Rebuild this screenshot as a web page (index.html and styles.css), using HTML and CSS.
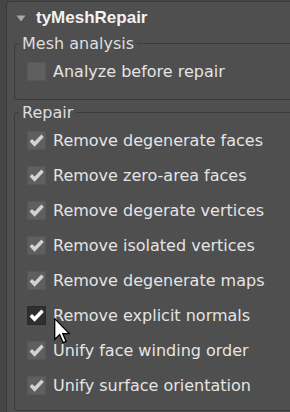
FILE: index.html
```html
<!DOCTYPE html>
<html lang="en">
<head>
    <meta charset="UTF-8">
    <title>tyMeshRepair</title>
    <link rel="stylesheet" href="styles.css">
</head>
<body>
    <div class="panel">
        <div class="rollout-header">
            <svg class="arrow" width="10" height="7" viewBox="0 0 10 7"><path d="M0.5 0.5 H9.5 L5 6.5 Z" fill="#a8a8a8"/></svg>
            <span class="rollout-title">tyMeshRepair</span>
        </div>

        <fieldset class="group">
            <legend>Mesh analysis</legend>
            <label class="check-row">
                <span class="box"></span>
                <span class="check-label">Analyze before repair</span>
            </label>
        </fieldset>

        <fieldset class="group group-repair">
            <legend>Repair</legend>
            <label class="check-row">
                <span class="box checked"><svg viewBox="0 0 17 17"><path d="M1.6 9.4 L4 7 L6.6 9.5 L13.4 2.5 L15.8 4.9 L6.6 14.8 Z"/></svg></span>
                <span class="check-label">Remove degenerate faces</span>
            </label>
            <label class="check-row">
                <span class="box checked"><svg viewBox="0 0 17 17"><path d="M1.6 9.4 L4 7 L6.6 9.5 L13.4 2.5 L15.8 4.9 L6.6 14.8 Z"/></svg></span>
                <span class="check-label">Remove zero-area faces</span>
            </label>
            <label class="check-row">
                <span class="box checked"><svg viewBox="0 0 17 17"><path d="M1.6 9.4 L4 7 L6.6 9.5 L13.4 2.5 L15.8 4.9 L6.6 14.8 Z"/></svg></span>
                <span class="check-label">Remove degerate vertices</span>
            </label>
            <label class="check-row">
                <span class="box checked"><svg viewBox="0 0 17 17"><path d="M1.6 9.4 L4 7 L6.6 9.5 L13.4 2.5 L15.8 4.9 L6.6 14.8 Z"/></svg></span>
                <span class="check-label">Remove isolated vertices</span>
            </label>
            <label class="check-row">
                <span class="box checked"><svg viewBox="0 0 17 17"><path d="M1.6 9.4 L4 7 L6.6 9.5 L13.4 2.5 L15.8 4.9 L6.6 14.8 Z"/></svg></span>
                <span class="check-label">Remove degenerate maps</span>
            </label>
            <label class="check-row hover">
                <span class="box checked"><svg viewBox="0 0 17 17"><path d="M1.6 9.4 L4 7 L6.6 9.5 L13.4 2.5 L15.8 4.9 L6.6 14.8 Z"/></svg></span>
                <span class="check-label">Remove explicit normals</span>
                <svg class="cursor" width="17" height="26" viewBox="0 0 13 20"><path d="M0.5 0.5 V16.5 L4.3 12.8 L7 19 L9.3 18 L6.7 12 H11.7 Z" fill="#fff" stroke="#000" stroke-width="1" stroke-linejoin="miter"/></svg>
            </label>
            <label class="check-row">
                <span class="box checked"><svg viewBox="0 0 17 17"><path d="M1.6 9.4 L4 7 L6.6 9.5 L13.4 2.5 L15.8 4.9 L6.6 14.8 Z"/></svg></span>
                <span class="check-label">Unify face winding order</span>
            </label>
            <label class="check-row">
                <span class="box checked"><svg viewBox="0 0 17 17"><path d="M1.6 9.4 L4 7 L6.6 9.5 L13.4 2.5 L15.8 4.9 L6.6 14.8 Z"/></svg></span>
                <span class="check-label">Unify surface orientation</span>
            </label>
        </fieldset>
    </div>
</body>
</html>
```

FILE: styles.css
```css
* {
    box-sizing: border-box;
}

html, body {
    margin: 0;
    padding: 0;
}

body {
    background: #454545;
    font-family: "DejaVu Sans", sans-serif;
    color: #e4e4e4;
    overflow: hidden;
}

.panel {
    margin: 1px 0 0 6px;
    padding: 0 0 1px 7px;
    background: #4f4f4f;
    border-top: 1px solid #3a3a3a;
    border-left: 1px solid #3a3a3a;
    border-top-left-radius: 4px;
    height: 411px;
}

.rollout-header {
    display: flex;
    align-items: center;
    height: 32px;
    padding-left: 2px;
    gap: 10px;
}

.arrow {
    display: block;
}

.rollout-title {
    font-family: "Liberation Sans", sans-serif;
    font-weight: bold;
    font-size: 17px;
    color: #f2f2f2;
}

.group {
    margin: 0;
    padding: 9px 0 18px 12px;
    border: 1px solid #3a3a3a;
    border-right: none;
    border-radius: 4px 0 0 4px;
    min-width: 0;
}

.group legend {
    margin-left: -8px;
    padding: 0 3px;
    font-size: 16px;
    line-height: 19px;
    color: #dedede;
}

.group-repair {
    margin-top: 3px;
    padding-bottom: 15px;
    display: flex;
    flex-direction: column;
    gap: 16px;
}

.check-row {
    position: relative;
    display: flex;
    align-items: center;
    gap: 7px;
    height: 19px;
    font-size: 16px;
}

.box {
    width: 19px;
    height: 19px;
    flex: none;
    background: #5f5f5f;
    border: 1px solid #575757;
}

.box svg {
    display: block;
    width: 17px;
    height: 17px;
    fill: #d2d2d2;
}

.hover .box {
    background: #2f2f2f;
    border-color: #2a2a2a;
}

.hover .box svg {
    fill: #fff;
}

.check-label {
    white-space: nowrap;
}

.cursor {
    position: absolute;
    left: 27px;
    top: 12px;
}
```
